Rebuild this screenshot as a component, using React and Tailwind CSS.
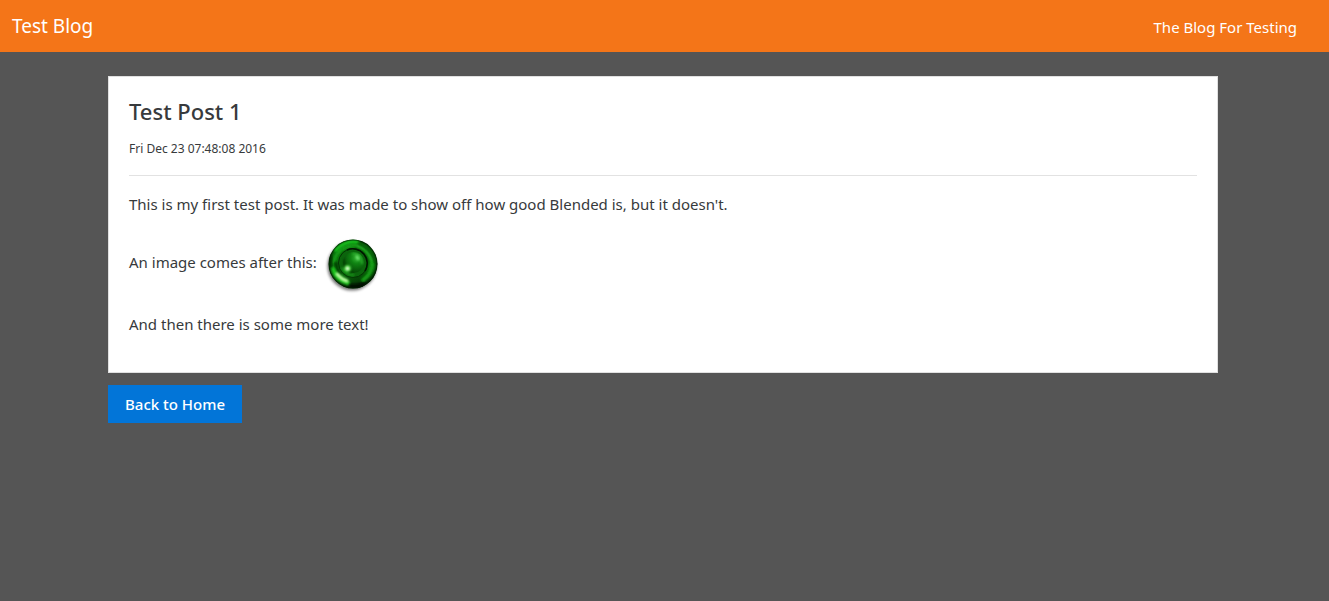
function GreenOrb() {
  return (
    <svg viewBox="0 0 60 60" className="h-[60px] w-[60px]" role="img" aria-label="Green orb">
      <defs>
        <radialGradient id="rim" cx="0.5" cy="0.5" r="0.5">
          <stop offset="0" stopColor="#0a5a0a" />
          <stop offset="0.55" stopColor="#0a680b" />
          <stop offset="0.7" stopColor="#0b7a0c" />
          <stop offset="0.88" stopColor="#0a700c" />
          <stop offset="1" stopColor="#033003" />
        </radialGradient>
        <linearGradient id="shade" x1="0.35" y1="0.1" x2="0.62" y2="1">
          <stop offset="0.6" stopColor="#001000" stopOpacity="0" />
          <stop offset="1" stopColor="#001000" stopOpacity="0.9" />
        </linearGradient>
        <radialGradient id="core" cx="0.65" cy="0.28" r="0.8">
          <stop offset="0" stopColor="#35b535" />
          <stop offset="0.35" stopColor="#0f8312" />
          <stop offset="1" stopColor="#043e04" />
        </radialGradient>
        <filter id="soft1" x="-50%" y="-50%" width="200%" height="200%">
          <feGaussianBlur stdDeviation="0.8" />
        </filter>
        <filter id="soft2" x="-50%" y="-50%" width="200%" height="200%">
          <feGaussianBlur stdDeviation="1.6" />
        </filter>
        <clipPath id="disc">
          <circle cx="30" cy="30" r="24.5" />
        </clipPath>
      </defs>
      <circle cx="29" cy="32" r="24.5" fill="#000" opacity="0.55" filter="url(#soft2)" />
      <circle cx="30" cy="30" r="24.5" fill="url(#rim)" />
      <g clipPath="url(#disc)" fill="none" strokeLinecap="round">
        <path d="M13 16 Q22 6 34 8" stroke="#17b81c" strokeWidth="4" filter="url(#soft1)" />
        <path d="M11 28 Q13 15 27 12 Q44 9 50 27" stroke="#1ba81f" strokeWidth="2" filter="url(#soft1)" />
        <path d="M35 10 Q49 15 52 30" stroke="#053f05" strokeWidth="1.5" filter="url(#soft1)" />
        <path d="M33 14 Q45 17 47 32" stroke="#064806" strokeWidth="1.5" filter="url(#soft1)" />
        <path d="M34 12 Q47 17 49 31" stroke="#35d035" strokeWidth="1.2" filter="url(#soft1)" />
        <circle cx="30" cy="30" r="24.5" fill="url(#shade)" />
        <path d="M8 23 Q6 30 9 36" stroke="#033003" strokeWidth="3" filter="url(#soft1)" />
        <path d="M13 29 Q13 35 17 40" stroke="#043704" strokeWidth="3" filter="url(#soft1)" />
        <path d="M10 35 Q14 46 25 49" stroke="#1fc51f" strokeWidth="4" filter="url(#soft1)" />
        <path d="M14 40 Q18 45 24 47" stroke="#c2ffa8" strokeWidth="3" filter="url(#soft1)" />
        <path d="M49 30 Q49 40 40 46" stroke="#129c12" strokeWidth="4" filter="url(#soft1)" />
        <path d="M28 52 Q36 53 41 50" stroke="#010d01" strokeWidth="4" filter="url(#soft1)" />
        <circle cx="30" cy="30" r="24" stroke="#022002" strokeWidth="1" opacity="0.5" />
      </g>
      <circle cx="30" cy="29" r="14.5" fill="#0b650c" stroke="#043404" strokeWidth="1" />
      <path d="M24 16 A14.5 14.5 0 0 1 42 37" fill="none" stroke="#011601" strokeWidth="1.5" />
      <path d="M19 34 Q22 40 31 41" fill="none" stroke="#1d9c1d" strokeWidth="2" filter="url(#soft1)" />
      <circle cx="30.5" cy="28.5" r="10.5" fill="url(#core)" />
      <path d="M29 20 Q38 19 39 30" fill="none" stroke="#35b535" strokeWidth="1.5" filter="url(#soft1)" />
      <path d="M21 25 Q20 35 29 39" fill="none" stroke="#043c04" strokeWidth="1.5" filter="url(#soft1)" />
      <path d="M33 22 Q35 23 35.5 26" fill="none" stroke="#74e874" strokeWidth="2.5" filter="url(#soft1)" />
      <circle cx="24.5" cy="34.5" r="3.5" fill="#3dcc35" filter="url(#soft1)" />
      <circle cx="24.5" cy="34.5" r="2" fill="#e2ffd6" filter="url(#soft1)" />
    </svg>
  );
}

export default function App() {
  return (
    <div className="min-h-screen bg-[#555555] font-['Noto_Sans','Open_Sans',sans-serif] text-base text-[#373a3c]">
      <header className="flex h-[52px] items-center justify-between bg-[#f47518] pl-3 pr-8 text-white">
        <a href="#home" className="text-[19px]">Test Blog</a>
        <a href="#about" className="pt-0.5 text-[15px]">The Blog For Testing</a>
      </header>
      <main className="pr-[3px] pt-6">
        <div className="mx-auto max-w-[1110px]">
          <article className="border border-[#e0e0e0] bg-white p-5">
            <h1 className="text-[22px] font-medium leading-7">Test Post 1</h1>
            <p className="mt-3 text-xs leading-6">Fri Dec 23 07:48:08 2016</p>
            <hr className="mb-4 mt-3.5 border-[#e2e2e2]" />
            <div className="text-[15px] leading-6">
              <p>This is my first test post. It was made to show off how good Blended is, but it doesn't.</p>
              <p className="mt-4 flex items-start gap-1.5">
                <span className="py-[18px]">An image comes after this:</span>
                <span className="py-0.5"><GreenOrb /></span>
              </p>
              <p className="my-4">And then there is some more text!</p>
            </div>
          </article>
          <a href="#home" className="mt-3 inline-block border border-[#0275d8] bg-[#0275d8] px-4 py-1.5 text-[15px] font-medium leading-6 text-white">
            Back to Home
          </a>
        </div>
      </main>
    </div>
  );
}
